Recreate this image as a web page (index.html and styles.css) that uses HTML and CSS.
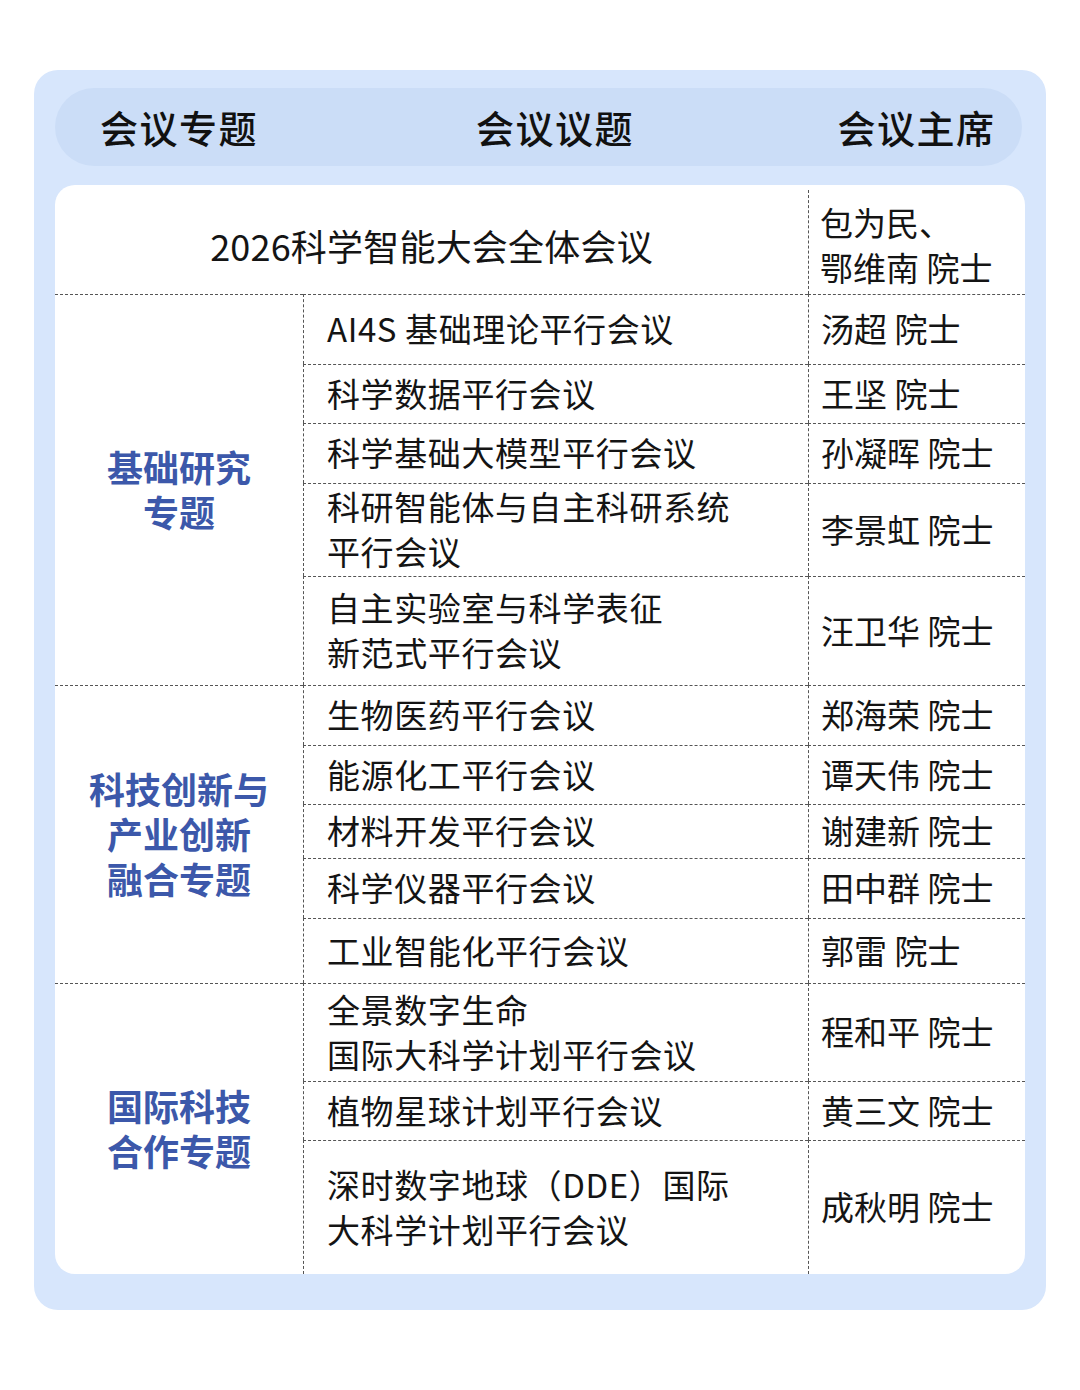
FILE: index.html
```html
<!DOCTYPE html>
<html lang="zh-CN">
<head>
<meta charset="utf-8">
<link rel="stylesheet" href="styles.css">
</head>
<body>
<div class="page">
  <div class="card">
    <div class="head">
      <div class="hcell">会议专题</div>
      <div class="hcell">会议议题</div>
      <div class="hcell">会议主席</div>
    </div>
    <div class="table">
      <div class="full">2026科学智能大会全体会议</div>
      <div class="chair first">包为民、<br>鄂维南 院士</div>

      <div class="topic g1">基础研究<br>专题</div>
      <div class="item">AI4S 基础理论平行会议</div>
      <div class="chair">汤超 院士</div>
      <div class="item">科学数据平行会议</div>
      <div class="chair">王坚 院士</div>
      <div class="item">科学基础大模型平行会议</div>
      <div class="chair">孙凝晖 院士</div>
      <div class="item">科研智能体与自主科研系统<br>平行会议</div>
      <div class="chair">李景虹 院士</div>
      <div class="item">自主实验室与科学表征<br>新范式平行会议</div>
      <div class="chair">汪卫华 院士</div>

      <div class="topic g2">科技创新与<br>产业创新<br>融合专题</div>
      <div class="item">生物医药平行会议</div>
      <div class="chair">郑海荣 院士</div>
      <div class="item">能源化工平行会议</div>
      <div class="chair">谭天伟 院士</div>
      <div class="item">材料开发平行会议</div>
      <div class="chair">谢建新 院士</div>
      <div class="item">科学仪器平行会议</div>
      <div class="chair">田中群 院士</div>
      <div class="item">工业智能化平行会议</div>
      <div class="chair">郭雷 院士</div>

      <div class="topic g3">国际科技<br>合作专题</div>
      <div class="item">全景数字生命<br>国际大科学计划平行会议</div>
      <div class="chair">程和平 院士</div>
      <div class="item">植物星球计划平行会议</div>
      <div class="chair">黄三文 院士</div>
      <div class="item">深时数字地球（DDE）国际<br>大科学计划平行会议</div>
      <div class="chair">成秋明 院士</div>
    </div>
  </div>
</div>
</body>
</html>
```

FILE: styles.css
```css
html, body {
  margin: 0;
  padding: 0;
  background: #ffffff;
}

body {
  font-family: "Noto Sans CJK SC", "Noto Sans", sans-serif;
  color: #141414;
}

.page {
  width: 1080px;
  height: 1390px;
  padding: 70px 34px 0 34px;
  box-sizing: border-box;
}

.card {
  width: 1012px;
  background: #d7e6fc;
  border-radius: 24px;
  padding: 18px 21px 36px 21px;
  box-sizing: border-box;
}

.head {
  display: grid;
  grid-template-columns: 248px 504px 1fr;
  height: 78px;
  margin-right: 3px;
  background: #cbddf7;
  border-radius: 39px;
  align-items: center;
}

.hcell {
  text-align: center;
  font-size: 38px;
  font-weight: 500;
  letter-spacing: 1.5px;
  line-height: 76px;
  color: #111;
}

.hcell:last-child {
  padding-left: 4px;
}

.table {
  margin-top: 19px;
  background: #ffffff;
  border-radius: 20px;
  display: grid;
  grid-template-columns: 248px 505px 1fr;
  grid-template-rows: 109px 70px 59px 60px 93px 109px 60px 59px 54px 60px 65px 98px 59px 134px;
}

.table > div {
  display: flex;
  align-items: center;
  box-sizing: border-box;
  font-size: 33px;
  line-height: 45px;
}

.full {
  grid-column: span 2;
  justify-content: center;
  padding-top: 12px;
  font-size: 36px !important;
  letter-spacing: 0.2px;
}

.chair {
  padding-left: 12px;
  padding-bottom: 2px;
  border-top: 1px dashed #555;
  border-left: 1px dashed #555;
}

.chair.first {
  border-top: none;
  padding-top: 10px;
  padding-bottom: 0;
  border-left: none;
  position: relative;
}

.chair.first::before {
  content: "";
  position: absolute;
  left: 0;
  top: 5px;
  bottom: 0;
  border-left: 1px dashed #555;
}

.item {
  padding-left: 23px;
  padding-bottom: 2px;
  border-top: 1px dashed #555;
  border-left: 1px dashed #555;
  letter-spacing: 0.6px;
}

.topic {
  border-top: 1px dashed #555;
  justify-content: center;
  text-align: center;
  font-size: 36px !important;
  font-weight: 700;
  color: #3c58aa;
  padding-bottom: 2px;
}

.g1 { grid-row: span 5; }
.g2 { grid-row: span 5; }
.g3 { grid-row: span 3; }
```
